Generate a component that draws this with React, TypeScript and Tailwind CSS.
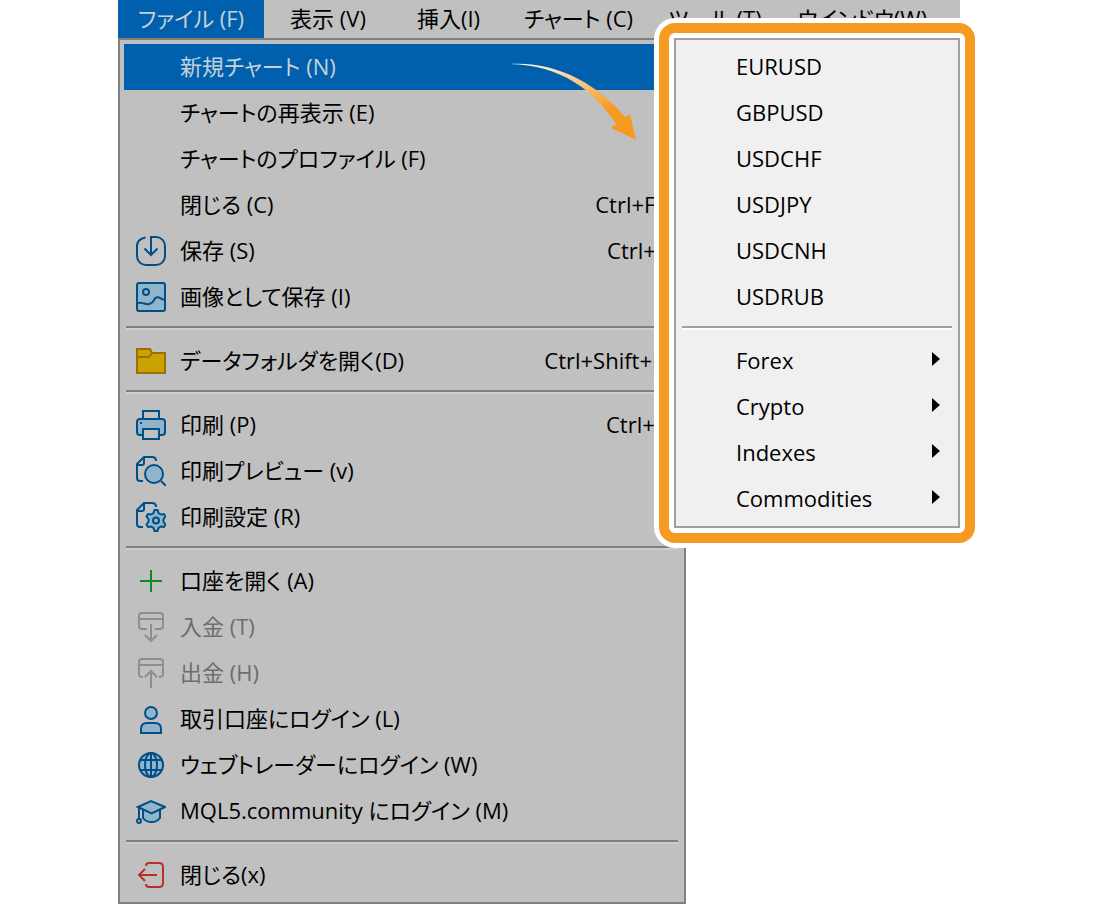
import type { ReactNode } from 'react';
import clsx from 'clsx';

type Item = {
  label: string;
  icon?: ReactNode;
  shortcut?: string;
  disabled?: boolean;
};

const menuBar = [
  { label: 'ファイル (F)', width: 'w-[146px]', open: true },
  { label: '表示 (V)', width: 'w-[128px]' },
  { label: '挿入(I)', width: 'w-[113px]' },
  { label: 'チャート (C)', width: 'w-[147px]' },
  { label: 'ツール (T)', width: 'w-[126px]' },
  { label: 'ウインドウ(W)', width: 'w-[169px]' },
];

function Icon({ children, className }: { children: ReactNode; className?: string }) {
  return (
    <svg
      viewBox="0 0 30 30"
      fill="none"
      strokeWidth="2"
      className={clsx('h-[30px] w-[30px]', className ?? 'stroke-[#004f87]')}
      aria-hidden="true"
    >
      {children}
    </svg>
  );
}

const SaveIcon = (
  <Icon>
    <path d="M9.5 1.4C4 2.5 1 6 1 10v10a9 9 0 0 0 9 9h10a9 9 0 0 0 9-9V10a9 9 0 0 0-9-9h-5v18" />
    <path d="M8.5 12.5 15 19l6.500-6.500" />
  </Icon>
);

const ImageIcon = (
  <Icon>
    <rect x="1" y="1" width="28" height="28" rx="2" fill="#90b4cc" />
    <circle cx="10" cy="10" r="3" />
    <path d="M2 21c3-1 4 0 6 .5s3 1 5 .5c3-1 4-1 5-4 1-2 3-3 5-2.500 2 .5 2 2 5 2" />
  </Icon>
);

const FolderIcon = (
  <Icon className="stroke-[#a06c0c]">
    <path d="M1 3h13l2 4h13v20H1z" fill="#c9a400" />
    <path d="M1 11h12l3-4" />
  </Icon>
);

const PrinterIcon = (
  <Icon>
    <path d="M7 9V1h16v8" />
    <path d="M6 25H4a3 3 0 0 1-3-3V12a3 3 0 0 1 3-3h22a3 3 0 0 1 3 3v10a3 3 0 0 1-3 3h-2" fill="#90b4cc" />
    <rect x="7" y="19" width="16" height="10" fill="#c0c0c0" />
    <path d="M4 13h2" />
  </Icon>
);

const PreviewIcon = (
  <Icon>
    <path d="M7 25H4a3 3 0 0 1-3-3V8l7-7h8q4 0 4 4" />
    <path d="M2 9h4q2 0 2-2V2" />
    <circle cx="18" cy="18" r="9" fill="#90b4cc" />
    <path d="m25 25 5 5" />
  </Icon>
);

const SetupIcon = (
  <Icon>
    <path d="M7 25H4a3 3 0 0 1-3-3V8l7-7h8q4 0 4 4" />
    <path d="M2 9h4q2 0 2-2V2" />
    <path
      d="m17.500 11 1-3h3l1 3 2.500 1.500 3-.5 1.500 2.500-2 2.500v3l2 2.500-1.500 2.500-3-.5-2.500 1.500-1 3h-3l-1-3-2.500-1.500-3 .5-1.500-2.500 2-2.500v-3l-2-2.500L12 12l3 .5z"
      fill="#90b4cc"
    />
    <circle cx="20" cy="18.500" r="3" />
  </Icon>
);

const PlusIcon = (
  <Icon className="stroke-[#0a8a22]">
    <path d="M15 4v22M4 15h22" />
  </Icon>
);

const DepositIcon = (
  <Icon className="stroke-[#8e8e8e]">
    <path d="M11 17H6a3 3 0 0 1-3-3V4a3 3 0 0 1 3-3h18a3 3 0 0 1 3 3v10a3 3 0 0 1-3 3h-5M3 7h24" />
    <path d="M15 12v17m-6-6 6 6 6-6" />
  </Icon>
);

const WithdrawIcon = (
  <Icon className="stroke-[#8e8e8e]">
    <path d="M7 19q-4 0-4-3V4a3 3 0 0 1 3-3h18a3 3 0 0 1 3 3v12q0 3-4 3M3 7h24" />
    <path d="M15 30V13m-6 6 6-6 6 6" />
  </Icon>
);

const UserIcon = (
  <Icon>
    <circle cx="15" cy="9" r="6" fill="#90b4cc" />
    <path d="M5 29v-4q0-6 6-6h8q6 0 6 6v4z" fill="#90b4cc" />
  </Icon>
);

const GlobeIcon = (
  <Icon>
    <circle cx="15" cy="15" r="12" fill="#90b4cc" />
    <ellipse cx="15" cy="15" rx="6" ry="12" />
    <path d="M15 3v24M4 10h22M4 20h22" />
  </Icon>
);

const CapIcon = (
  <Icon>
    <path d="M7 13v9q3 4 8.500 4t8.500-4v-9" fill="#90b4cc" />
    <path d="m2 11 13-6 14 6-13.500 6.500z" fill="#90b4cc" />
    <path d="M3 11v12" />
    <circle cx="3" cy="25" r="2" />
  </Icon>
);

const ExitIcon = (
  <Icon className="stroke-[#b8302c]">
    <path d="M10 6q0-3 3-3h10q4 0 4 4v16q0 4-4 4H13q-3 0-3-3" />
    <path d="M21 15H3m6-6-6 6 6 6" />
  </Icon>
);

const fileMenu: Item[][] = [
  [
    { label: 'チャートの再表示 (E)' },
    { label: 'チャートのプロファイル (F)' },
    { label: '閉じる (C)', shortcut: 'Ctrl+F4' },
    { label: '保存 (S)', icon: SaveIcon, shortcut: 'Ctrl+S' },
    { label: '画像として保存 (I)', icon: ImageIcon },
  ],
  [{ label: 'データフォルダを開く(D)', icon: FolderIcon, shortcut: 'Ctrl+Shift+D' }],
  [
    { label: '印刷 (P)', icon: PrinterIcon, shortcut: 'Ctrl+P' },
    { label: '印刷プレビュー (v)', icon: PreviewIcon },
    { label: '印刷設定 (R)', icon: SetupIcon },
  ],
  [
    { label: '口座を開く (A)', icon: PlusIcon },
    { label: '入金 (T)', icon: DepositIcon, disabled: true },
    { label: '出金 (H)', icon: WithdrawIcon, disabled: true },
    { label: '取引口座にログイン (L)', icon: UserIcon },
    { label: 'ウェブトレーダーにログイン (W)', icon: GlobeIcon },
    { label: 'MQL5.community にログイン (M)', icon: CapIcon },
  ],
  [{ label: '閉じる(x)', icon: ExitIcon }],
];

const symbols = ['EURUSD', 'GBPUSD', 'USDCHF', 'USDJPY', 'USDCNH', 'USDRUB'];
const groups = ['Forex', 'Crypto', 'Indexes', 'Commodities'];

function MenuItem({ label, icon, shortcut, disabled }: Item) {
  return (
    <li>
      <button
        type="button"
        disabled={disabled}
        className="flex h-[46px] w-full items-center gap-3.5 pr-3 pl-3 text-left whitespace-nowrap disabled:text-[#6d6d6d]"
      >
        <span className="w-[30px] shrink-0">{icon}</span>
        <span className="flex-1 pb-0.5">{label}</span>
        {shortcut && <kbd className="pb-0.5 font-[inherit]">{shortcut}</kbd>}
      </button>
    </li>
  );
}

function Separator({ className }: { className: string }) {
  return <li role="separator" className={clsx('mx-0.5 mt-1.5 mb-2 h-1 border-t-2 border-b-2', className)} />;
}

function SymbolMenu() {
  return (
    <div className="absolute -top-[21px] left-full z-10 -ml-[21px] w-[316px] rounded-2xl border-10 border-[#f59b22] bg-white p-[5px] ring-5 ring-white">
      <ul className="border-2 border-[#a0a0a0] bg-[#f0f0f0] p-1 text-black">
        {symbols.map((name) => (
          <li key={name}>
            <button type="button" className="flex h-[46px] w-full items-center pb-0.5 pl-14">
              {name}
            </button>
          </li>
        ))}
        <Separator className="border-t-[#a0a0a0] border-b-white" />
        {groups.map((name) => (
          <li key={name}>
            <button type="button" className="flex h-[46px] w-full items-center justify-between pr-3.5 pb-0.5 pl-14">
              {name}
              <svg viewBox="0 0 8 16" className="h-4 w-2" aria-hidden="true">
                <path d="M0 0v14l8-7z" />
              </svg>
            </button>
          </li>
        ))}
      </ul>
    </div>
  );
}

function PointerArrow() {
  return (
    <svg viewBox="0 0 128 78" className="absolute top-[19px] right-[42px] z-10 h-[78px] w-32" aria-hidden="true">
      <defs>
        <linearGradient id="arrow" x1="0" y1="0" x2="1" y2="1">
          <stop offset="0" stopColor="#fff" />
          <stop offset="0.2" stopColor="#fde3c0" />
          <stop offset="0.7" stopColor="#f59b22" />
        </linearGradient>
      </defs>
      <path d="M0 1C45-2 87 20 115 54l5-3 6 26-25-12 5-4C84 27 50 2 0 1z" fill="url(#arrow)" />
    </svg>
  );
}

export default function App() {
  return (
    <main className="min-h-screen bg-white pr-[140px] pl-[118px] font-['Open_Sans','Noto_Sans_CJK_JP',sans-serif] text-[22px] leading-8 text-black [font-feature-settings:'palt']">
      <nav className="flex h-[38px] bg-[#c0c0c0]">
        {menuBar.map(({ label, width, open }) => (
          <button
            key={label}
            type="button"
            className={clsx('shrink-0 pb-0.5 whitespace-nowrap', width, open && 'bg-[#0060ad] text-[#c8d0d8]')}
          >
            {label}
          </button>
        ))}
      </nav>

      <ul className="w-[568px] border-2 border-[#808080] bg-[#c0c0c0] p-1">
        <li className="relative">
          <button
            type="button"
            className="flex h-[46px] w-full items-center bg-[#0060ad] pb-0.5 pl-14 text-[#c8d0d8]"
          >
            新規チャート (N)
          </button>
          <PointerArrow />
          <SymbolMenu />
        </li>
        {fileMenu.map((items, i) => [
          i > 0 && <Separator key={`separator-${i}`} className="border-t-[#808080] border-b-[#cdcdcd]" />,
          ...items.map((item) => <MenuItem key={item.label} {...item} />),
        ])}
      </ul>
    </main>
  );
}
